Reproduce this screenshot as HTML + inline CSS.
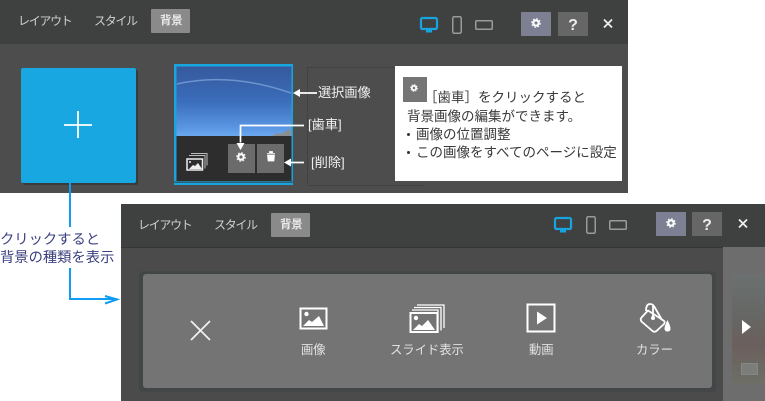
<!DOCTYPE html>
<html lang="ja"><head><meta charset="utf-8"><title>背景</title>
<style>
html,body{margin:0;padding:0;background:#fff;}
body{width:765px;height:401px;overflow:hidden;position:relative;font-family:"Liberation Sans","Noto Sans CJK JP",sans-serif;}
.a{position:absolute;}
.t{position:absolute;white-space:nowrap;line-height:1;}
.nav{color:#d0d0d0;font-size:12px;letter-spacing:-1.300px;}
.bg{color:#e8e8e8;font-size:11.500px;font-weight:bold;letter-spacing:-.4px;}
.k{color:#3a3a3a;font-size:13.500px;}
.w{color:#efefef;font-size:13.200px;}
.l{color:#e2e2e2;font-size:12.300px;}
svg{position:absolute;overflow:visible;}
</style></head><body>

<!-- TOP PANEL -->
<div class="a" style="left:0;top:0;width:628px;height:193px;background:#4d4d4d"></div>
<div class="a" style="left:0;top:0;width:628px;height:44px;background:#3f4040"></div>
<div class="t nav" style="left:18px;top:15px">レイアウト</div>
<div class="t nav" style="left:94px;top:15px">スタイル</div>
<div class="a" style="left:151px;top:9px;width:39px;height:24px;background:#8a8a8a;border-radius:1px"></div>
<div class="t bg" style="left:160px;top:16px">背景</div>

<svg style="left:0;top:0" width="765" height="401" viewBox="0 0 765 401">
<defs>
<g id="desk"><rect x="1" y="1" width="16" height="11" rx="1.500" fill="none" stroke="#18a4dd" stroke-width="2.200"/><rect x="6" y="12" width="6" height="3.500" fill="#18a4dd"/></g>
<g id="phone"><rect x=".75" y=".75" width="8.500" height="16.500" rx="1.500" fill="none" stroke="#9a9a9a" stroke-width="1.500"/></g>
<g id="land"><rect x=".75" y=".75" width="16.500" height="8.500" rx="1" fill="none" stroke="#9a9a9a" stroke-width="1.500"/></g>
<g id="gear"><circle cx="0" cy="0" r="2.700" fill="none" stroke="#fff" stroke-width="2.200"/><circle cx="0" cy="0" r="4.300" fill="none" stroke="#fff" stroke-width="1" stroke-dasharray="1.700 1.680"/></g>
<linearGradient id="sky" x1="0" y1="0" x2="0" y2="1"><stop offset="0" stop-color="#36599c"/><stop offset=".5" stop-color="#3a6dbb"/><stop offset=".88" stop-color="#5a96e2"/><stop offset="1" stop-color="#6aa8ee"/></linearGradient>
</defs>
<use href="#desk" x="420" y="17"/>
<use href="#phone" x="452" y="16"/>
<use href="#land" x="475" y="20"/>
<rect x="521" y="12" width="30" height="24" fill="#7d8093"/>
<use href="#gear" transform="translate(536,23)"/>
<rect x="558" y="12" width="30" height="24" fill="#666"/>
<text x="573" y="30" font-family="Liberation Sans" font-size="16" font-weight="bold" fill="#ececec" text-anchor="middle">?</text>
<path d="M604 19.500l8 8M612 19.500l-8 8" stroke="#eee" stroke-width="1.800" fill="none"/>

<!-- blue tile -->
<rect x="23" y="70" width="115" height="115" rx="2" fill="#3a3a3a"/>
<rect x="21" y="68" width="115" height="115" rx="2" fill="#18a7e0"/>
<path d="M64 125h28M78 111v27" stroke="#fff" stroke-width="1.800"/>

<!-- thumbnail -->
<rect x="174" y="64" width="119" height="121" fill="#18a4dd"/>
<rect x="176.500" y="66.500" width="115" height="114.500" fill="#2d2d2d"/>
<rect x="176.500" y="66.500" width="115" height="69.500" fill="url(#sky)"/>
<path d="M177 84Q230 72 291 93" stroke="#6f93cf" stroke-width="1.500" fill="none"/>
<path d="M272 136l5-3 4 1 5-3 5-2v7z" fill="#8b8f90"/>
<rect x="174" y="181.500" width="119" height="1.200" fill="#34474f"/>
<rect x="228" y="144" width="27" height="29" fill="#6b6b6b"/>
<rect x="257" y="144" width="27" height="29" fill="#6b6b6b"/>
<use href="#gear" transform="translate(241,157)"/>
<path d="M267 153.500h8M269.500 153v-1.500h3v1.500M267.500 155h7l-.6 6h-5.800z" fill="#fff" stroke="#fff" stroke-width=".8"/>
<g fill="none" stroke="#bdbdbd" stroke-width="1">
<path d="M191 153.500h16v12M189 155.500h16v13"/>
</g>
<rect x="187" y="159" width="15.500" height="11" fill="#2d2d2d" stroke="#eee" stroke-width="1.500"/>
<circle cx="190" cy="162" r="1" fill="#eee"/>
<path d="M189 169l4-4 2 1 3-3 4 6z" fill="#eee"/>

<!-- dashed outline next slot -->
<path d="M308 67.500h87M307.500 67v118M308 185.500h117" stroke="#404344" stroke-width="1" fill="none"/>

<!-- white callout arrows -->
<g stroke="#fff" stroke-width="1.700" fill="none">
<path d="M299 93h18"/>
<path d="M304 125.500h-63.500v17"/>
<path d="M288 162.500h16"/>
</g>
<g fill="#fff">
<path d="M293 93l7-4v8z"/>
<path d="M240.500 150l-4-7h8z"/>
<path d="M284 162.500l7-4v8z"/>
</g>

<!-- blue connector -->
<g stroke="#0f9cf2" stroke-width="2" fill="none">
<path d="M70 183v44M70 268v31h47"/>
<path d="M105 296l12 3.500-12 4"/>
</g>
</svg>

<div class="t w" style="left:318px;top:86px">選択画像</div>
<div class="t w" style="left:308px;top:118px">[歯車]</div>
<div class="t w" style="left:311px;top:156px">[削除]</div>

<!-- white note -->
<div class="a" style="left:395px;top:66px;width:227px;height:115px;background:#fff"></div>
<div class="a" style="left:403px;top:77px;width:24px;height:25px;background:#757575"></div>
<svg style="left:0;top:0" width="765" height="401"><g transform="translate(414,88) scale(.8)"><circle r="2.700" fill="none" stroke="#fff" stroke-width="2.200"/><circle r="4.300" fill="none" stroke="#fff" stroke-width="1" stroke-dasharray="1.700 1.680"/></g></svg>
<div class="t k" style="left:424px;top:91px">［歯車］をクリックすると</div>
<div class="t k" style="left:407px;top:110px">背景画像の編集ができます。</div>
<div class="a" style="left:407px;top:133px;width:3px;height:3px;border-radius:50%;background:#333"></div>
<div class="t k" style="left:416px;top:128px">画像の位置調整</div>
<div class="a" style="left:407px;top:151px;width:3px;height:3px;border-radius:50%;background:#333"></div>
<div class="t k" style="left:416px;top:146px">この画像をすべてのページに設定</div>

<!-- side label -->
<div class="t" style="left:0;top:233px;font-size:14.300px;color:#3b4080">クリックすると</div>
<div class="t" style="left:0;top:251px;font-size:14.300px;color:#3b4080">背景の種類を表示</div>

<!-- BOTTOM PANEL -->
<div class="a" style="left:121px;top:204px;width:644px;height:197px;background:#4b4b4b"></div>
<div class="a" style="left:121px;top:204px;width:644px;height:43px;background:#3f4040;border-bottom:1px solid #353535"></div>
<div class="t nav" style="left:138px;top:219px">レイアウト</div>
<div class="t nav" style="left:214px;top:219px">スタイル</div>
<div class="a" style="left:271px;top:213px;width:39px;height:24px;background:#8a8a8a;border-radius:1px"></div>
<div class="t bg" style="left:280px;top:220px">背景</div>

<div class="a" style="left:723px;top:247px;width:42px;height:154px;background:#6d6d6d"></div>
<div class="a" style="left:732px;top:274px;width:33px;height:110px;background:linear-gradient(180deg,#6c7070 0%,#656865 35%,#6b5f5d 65%,#6d6f66 100%)"></div>
<div class="a" style="left:139px;top:271px;width:577px;height:121px;background:#434647;border-radius:4px;filter:blur(.6px)"></div>
<div class="a" style="left:143px;top:274px;width:569px;height:114px;background:#747474;border-radius:3px"></div>

<svg style="left:0;top:0" width="765" height="401" viewBox="0 0 765 401">
<use href="#desk" x="554" y="217"/>
<use href="#phone" x="586" y="216"/>
<use href="#land" x="609" y="220"/>
<rect x="656" y="212" width="30" height="24" fill="#7d8093"/>
<use href="#gear" transform="translate(671,223)"/>
<rect x="692" y="212" width="30" height="24" fill="#666"/>
<text x="707" y="230" font-family="Liberation Sans" font-size="16" font-weight="bold" fill="#ececec" text-anchor="middle">?</text>
<path d="M739 219.500l8 8M747 219.500l-8 8" stroke="#eee" stroke-width="1.800" fill="none"/>

<!-- X -->
<path d="M191 321l19 19M210 321l-19 19" stroke="#f2f2f2" stroke-width="1.700" fill="none"/>

<!-- image icon -->
<rect x="300.500" y="308.500" width="26" height="20" fill="none" stroke="#fff" stroke-width="2"/>
<circle cx="306.500" cy="314" r="2.200" fill="#fff"/>
<path d="M303 326l6-6 3 2 7-6 5 10z" fill="#fff"/>

<!-- slideshow icon -->
<g fill="none" stroke="#fff" stroke-width="1.300">
<path d="M417 305h27v23M414 307.500h27v23M412 310h26v23"/>
</g>
<rect x="410.500" y="313" width="27" height="19" fill="#747474" stroke="#fff" stroke-width="2"/>
<circle cx="416" cy="318" r="2.200" fill="#fff"/>
<path d="M413 330l6-6 3 2 6-6 7 10z" fill="#fff"/>

<!-- video icon -->
<rect x="527.500" y="304.500" width="27" height="27" fill="none" stroke="#fff" stroke-width="2"/>
<path d="M537 311.500l10 6.500-10 6.500z" fill="#fff"/>

<!-- paint bucket -->
<g fill="none" stroke="#fff" stroke-width="1.800" stroke-linejoin="round">
<path d="M641.500 317.500L648 310.500 663.500 320.500Q665.500 322 664 324L656.500 331Q654.500 332.500 652.500 331L641.500 321.500Q640 319.500 641.500 317.500z"/>
<path d="M646 311Q646 304 650 304 653 304 654.500 307L662 320"/>
<path d="M653 306v11"/>
</g>
<circle cx="653" cy="318" r="2" fill="#fff"/>
<path d="M667.500 320Q664.500 326 664.500 328.500 664.500 331.500 667.500 331.500 670.500 331.500 670.500 328.500 670.500 326 667.500 320z" fill="#fff"/>

<!-- next arrow -->
<path d="M742 320l9 7-9 7z" fill="#fff"/>
<rect x="741.500" y="363.500" width="16" height="11" fill="#7b7d7a" stroke="#858785" stroke-width="1"/>
</svg>

<div class="t l" style="left:301px;top:344px">画像</div>
<div class="t l" style="left:390px;top:344px">スライド表示</div>
<div class="t l" style="left:529px;top:344px">動画</div>
<div class="t l" style="left:636px;top:344px">カラー</div>

</body></html>
